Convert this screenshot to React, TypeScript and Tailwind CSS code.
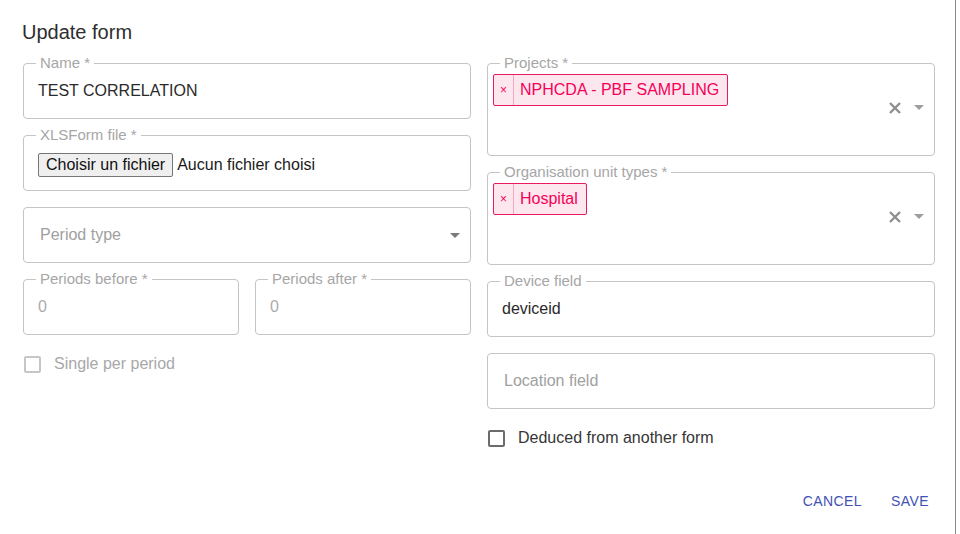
import React from 'react';

const Outlined: React.FC<{ label?: string; className?: string; children?: React.ReactNode }> = ({ label, className = '', children }) => (
  <div className={`relative rounded-[4px] border border-[#c4c4c4] ${className}`}>
    {label && (
      <span className="absolute left-[12px] top-[-10px] bg-white px-[4px] text-[15px] leading-[18px] text-[#a6a6a6] whitespace-nowrap">
        {label}
      </span>
    )}
    {children}
  </div>
);

const ClearIcon = () => (
  <svg width="12" height="12" viewBox="0 0 12 12">
    <path d="M1 1L11 11M11 1L1 11" stroke="#8f8f8f" strokeWidth="2.4" />
  </svg>
);

const Arrow: React.FC<{ color?: string }> = ({ color = '#9e9e9e' }) => (
  <svg width="10" height="5" viewBox="0 0 10 5">
    <polygon points="0,0 10,0 5,5" fill={color} />
  </svg>
);

const Chip: React.FC<{ text: string }> = ({ text }) => (
  <div className="flex h-[32px] items-stretch rounded-[2px] border border-[#ea1a61] bg-[#fde7ef] text-[#f50057]">
    <span className="flex w-[20px] items-center justify-center border-r border-[#f7a6c3] text-[12px]">×</span>
    <span className="flex items-center pl-[6px] pr-[8px] text-[16px] whitespace-nowrap">{text}</span>
  </div>
);

const MultiSelect: React.FC<{ label: string; chip: string }> = ({ label, chip }) => (
  <Outlined label={label} className="flex h-[93px]">
    <div className="flex flex-1 items-start pl-[5px] pt-[10px]">
      <Chip text={chip} />
    </div>
    <div className="flex items-center gap-[13px] pb-[4px] pr-[10px]">
      <ClearIcon />
      <Arrow />
    </div>
  </Outlined>
);

const Checkbox: React.FC<{ label: string; disabled?: boolean }> = ({ label, disabled }) => (
  <div className="flex h-[26px] items-center gap-[13px] pl-[1px]">
    <span
      className={`h-[17px] w-[17px] rounded-[2px] border-2 ${disabled ? 'border-[#c6c6c6]' : 'border-[#6b6b6b]'}`}
    />
    <span className={`text-[16px] ${disabled ? 'text-[#a8a8a8]' : 'text-[#363636]'}`}>{label}</span>
  </div>
);

export default function App() {
  return (
    <div className="flex h-[534px] w-full bg-white font-['Liberation_Sans',Arial,sans-serif]">
      <div className="flex w-[956px] flex-col border-r border-[#8a8a8a] bg-white">
        <h2 className="pl-[22px] pt-4 text-[20px] leading-[32px] text-[#2e2e2e]">Update form</h2>

        <div className="grid grid-cols-[448px_448px] gap-x-4 px-[23px] pt-[15px]">
          {/* Left column */}
          <div className="flex flex-col gap-4">
            <Outlined label="Name *" className="flex h-[56px] items-center pl-[14px]">
              <span className="text-[16px] text-[#2a2a2a]">TEST CORRELATION</span>
            </Outlined>

            <Outlined label="XLSForm file *" className="flex h-[56px] items-center pl-[14px] pt-[4px]">
              <span className="flex h-[24px] items-center rounded-[2px] border border-[#767676] bg-[#efefef] px-[7px] text-[16px] text-[#111]">
                Choisir un fichier
              </span>
              <span className="ml-[4px] text-[16px] text-[#1a1a1a]">Aucun fichier choisi</span>
            </Outlined>

            <Outlined className="flex h-[56px] items-center justify-between pl-[16px] pr-[10px]">
              <span className="text-[16px] text-[#a0a0a0]">Period type</span>
              <Arrow color="#7a7a7a" />
            </Outlined>

            <div className="grid grid-cols-2 gap-4">
              <Outlined label="Periods before *" className="flex h-[56px] items-center pl-[14px]">
                <span className="text-[16px] text-[#acacac]">0</span>
              </Outlined>
              <Outlined label="Periods after *" className="flex h-[56px] items-center pl-[14px]">
                <span className="text-[16px] text-[#acacac]">0</span>
              </Outlined>
            </div>

            <Checkbox label="Single per period" disabled />
          </div>

          {/* Right column */}
          <div className="flex flex-col gap-4">
            <MultiSelect label="Projects *" chip="NPHCDA - PBF SAMPLING" />
            <MultiSelect label="Organisation unit types *" chip="Hospital" />

            <Outlined label="Device field" className="flex h-[56px] items-center pl-[14px]">
              <span className="text-[16px] text-[#2a2a2a]">deviceid</span>
            </Outlined>

            <Outlined className="flex h-[56px] items-center pl-[16px]">
              <span className="text-[16px] text-[#a0a0a0]">Location field</span>
            </Outlined>

            <Checkbox label="Deduced from another form" />
          </div>
        </div>

        <div className="mt-[32px] flex justify-end pr-[13px]">
          <button className="h-[36px] min-w-[64px] px-2 text-[14px] uppercase tracking-[0.4px] text-[#3f51b5]">
            Cancel
          </button>
          <button className="ml-2 h-[36px] min-w-[64px] px-2 text-[14px] uppercase tracking-[0.4px] text-[#3f51b5]">
            Save
          </button>
        </div>
      </div>
      <div className="flex-1 bg-white" />
    </div>
  );
}
